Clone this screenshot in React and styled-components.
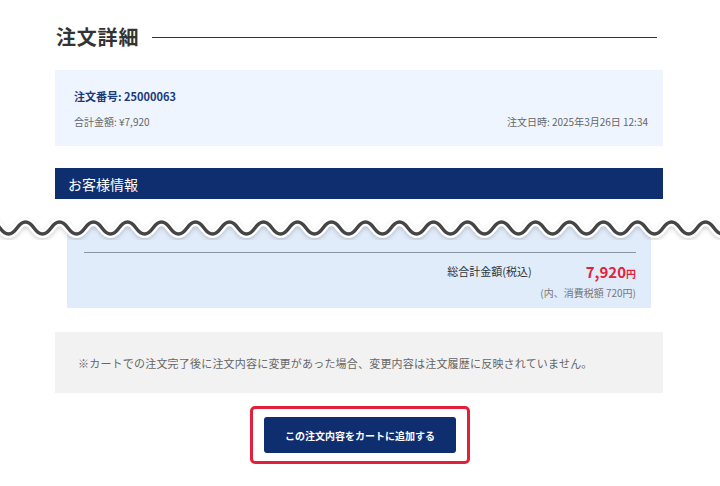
import React from "react";
import styled, { createGlobalStyle } from "styled-components";

const GlobalStyle = createGlobalStyle`
  body {
    margin: 0;
    background: #fff;
    font-family: "Noto Sans CJK JP", "Noto Sans", sans-serif;
    color: #333;
    overflow: hidden;
  }
`;

const buildWave = (width, mid, amp, period) => {
  const half = period / 2;
  let d = `M ${-half} ${mid} q ${half / 2} ${-amp * 2} ${half} 0`;
  for (let x = 0; x < width + period; x += half) {
    d += ` t ${half} 0`;
  }
  return d;
};

const Wave = () => {
  const line = buildWave(720, 29, 6, 34);
  const fill = `${line} L 760 0 L -40 0 Z`;
  return (
    <WaveSvg viewBox="0 0 720 46" width="720" height="46">
      <defs>
        <filter id="shadow" x="-5%" y="-50%" width="110%" height="200%">
          <feDropShadow dx="0" dy="2" stdDeviation="2" floodColor="#000" floodOpacity="0.18" />
        </filter>
      </defs>
      <path d={fill} fill="#fff" />
      <g filter="url(#shadow)">
        <path d={line} fill="none" stroke="#fff" strokeWidth="8" />
        <path d={line} fill="none" stroke="#444" strokeWidth="3.4" />
      </g>
    </WaveSvg>
  );
};

const App = () => {
  return (
    <>
      <GlobalStyle />
      <Page>
        <TitleRow>
          <h1>注文詳細</h1>
          <span className="rule" />
        </TitleRow>

        <InfoBox>
          <p className="orderNo">注文番号: 25000063</p>
          <div className="meta">
            <span>合計金額: ¥7,920</span>
            <span>注文日時: 2025年3月26日 12:34</span>
          </div>
        </InfoBox>

        <SectionBar>お客様情報</SectionBar>

        <Cut>
          <TotalBox>
            <div className="totalRow">
              <span className="label">総合計金額(税込)</span>
              <span className="price">
                7,920<small>円</small>
              </span>
            </div>
            <p className="tax">(内、消費税額 720円)</p>
          </TotalBox>
          <Wave />
        </Cut>

        <Notice>
          ※カートでの注文完了後に注文内容に変更があった場合、変更内容は注文履歴に反映されていません。
        </Notice>

        <ButtonArea>
          <Highlight>
            <CartButton type="button">この注文内容をカートに追加する</CartButton>
          </Highlight>
        </ButtonArea>
      </Page>
    </>
  );
};

const Page = styled.main`
  width: 608px;
  margin-left: 55px;
`;

const TitleRow = styled.div`
  display: flex;
  align-items: center;
  gap: 13px;
  padding-top: 22px;
  h1 {
    margin: 0;
    font-size: 20px;
    line-height: 30px;
    font-weight: 700;
    color: #333;
    letter-spacing: 0.8px;
    padding-left: 1px;
  }
  .rule {
    flex: 1;
    height: 1px;
    margin-right: 6px;
    background: #333;
  }
`;

const InfoBox = styled.section`
  margin-top: 18px;
  height: 76px;
  box-sizing: border-box;
  padding: 17px 15px 0 19px;
  background: #eff5fe;
  .orderNo {
    margin: 0;
    font-size: 11px;
    line-height: 18px;
    font-weight: 700;
    color: #1c3a78;
  }
  .meta {
    display: flex;
    justify-content: space-between;
    margin-top: 9px;
    font-size: 10px;
    line-height: 16px;
    color: #666;
  }
`;

const SectionBar = styled.h2`
  margin: 22px 0 0;
  height: 31px;
  padding-left: 13px;
  display: flex;
  align-items: center;
  background: #0f2e6f;
  color: #fff;
  font-size: 14px;
  font-weight: 400;
`;

const Cut = styled.div`
  position: relative;
  padding-top: 13px;
`;

const WaveSvg = styled.svg`
  position: absolute;
  top: 0;
  left: -55px;
  display: block;
`;

const TotalBox = styled.section`
  margin: 0 12px 0 12px;
  height: 96px;
  box-sizing: border-box;
  padding: 40px 15px 0 17px;
  background: #e1ecfb;
  .totalRow {
    display: flex;
    justify-content: flex-end;
    align-items: center;
    gap: 54px;
    border-top: 1px solid #8c949f;
    padding-top: 8px;
    height: 20px;
  }
  .label {
    font-size: 11px;
    color: #333;
  }
  .price {
    font-size: 15px;
    font-weight: 700;
    color: #e5203d;
    small {
      font-size: 10px;
      font-weight: 700;
    }
  }
  .tax {
    margin: 5px 0 0;
    text-align: right;
    font-size: 10px;
    line-height: 14px;
    color: #777;
  }
`;

const Notice = styled.p`
  margin: 24px 0 0;
  height: 61px;
  display: flex;
  align-items: center;
  padding-left: 23px;
  background: #f2f2f2;
  font-size: 11px;
  letter-spacing: 0.2px;
  color: #666;
`;

const ButtonArea = styled.div`
  display: flex;
  justify-content: center;
  margin-top: 13px;
  padding-left: 2px;
`;

const Highlight = styled.div`
  padding: 8px 11px;
  border: 3px solid #e3203c;
  border-radius: 5px;
`;

const CartButton = styled.button`
  width: 192px;
  height: 36px;
  border: none;
  border-radius: 3px;
  background: #0f2e6f;
  color: #fff;
  font-family: "Noto Sans CJK JP", sans-serif;
  font-size: 10px;
  font-weight: 700;
  cursor: pointer;
`;

export default App;
